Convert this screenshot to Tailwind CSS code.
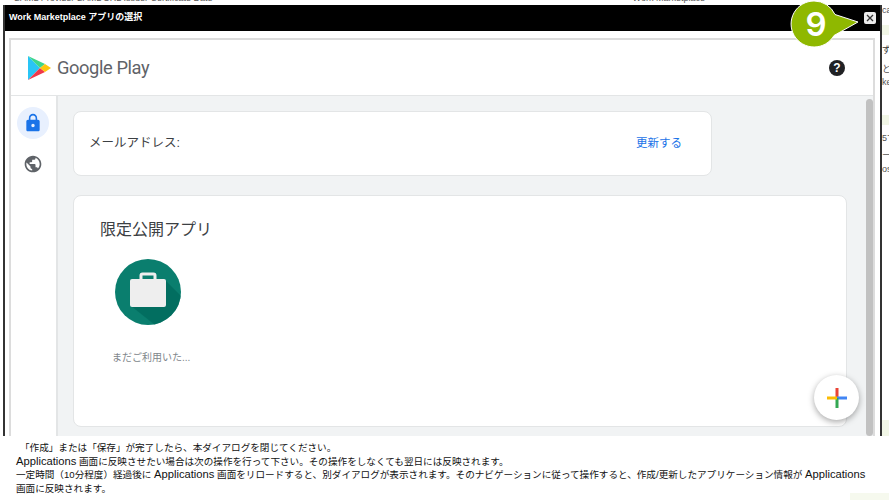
<!DOCTYPE html>
<html><head><meta charset="utf-8"><script src="https://cdn.jsdelivr.net/npm/@tailwindcss/browser@4"></script></head>
<body class="m-0 w-[889px] h-[500px] overflow-hidden bg-white font-['Liberation_Sans','Noto_Sans_CJK_JP',sans-serif]">
<div class="relative w-[889px] h-[500px] overflow-hidden">
  <!-- page behind the dialog -->
  <div class="absolute left-0 top-[-8px] w-[889px] whitespace-nowrap text-[9px] leading-[12px] text-[#555]"><span class="ml-[14px]">SAML Provider SAML URL Issuer Certificate Date</span><span class="ml-[420px]">Work Marketplace</span></div>
  <div class="absolute left-[881px] top-0 w-[8px] h-[500px] overflow-hidden text-[9px] leading-[12px] text-[#555] whitespace-nowrap">
    <div class="absolute left-[1px] top-[4px]">ca</div>
    <div class="absolute left-0 top-[25px] w-[8px] h-[10px] bg-[#f1f6e6]"></div>
    <div class="absolute left-[1px] top-[44px] text-[#333]">ず</div>
    <div class="absolute left-[1px] top-[63px]">との</div>
    <div class="absolute left-[1px] top-[76px]">ke</div>
    <div class="absolute left-0 top-[115px] w-[8px] h-[10px] bg-[#f1f6e6]"></div>
    <div class="absolute left-[1px] top-[132px]">5ず</div>
    <div class="absolute left-[1px] top-[149px]">ー</div>
    <div class="absolute left-[1px] top-[163px]">os</div>
    <div class="absolute left-0 top-[420px] w-[8px] h-[16px] bg-[#f1f6e6]"></div>
  </div>
  <div class="absolute left-[850px] top-[493px] w-[39px] h-[7px] bg-[#f6f9ee]"></div>
  <!-- dialog -->
  <div class="absolute left-[3px] top-[5px] w-[879px] h-[431px] bg-white border-x-2 border-[#333] flex flex-col">
    <div class="h-[26px] shrink-0 bg-black text-white text-[9px] font-bold flex items-center pl-[4px]">Work Marketplace アプリの選択</div>
    <div class="flex-1 min-h-0 pt-[7px] pl-[4px] pr-[5px]">
      <div class="h-full border-2 border-b-0 border-[#dcdcdc] flex flex-col bg-white">
        <div class="h-[56px] shrink-0 border-b border-[#e3e5e6] flex items-center justify-between pl-[17px] pr-[28px]">
          <div class="flex items-center gap-[6px]">
            <svg width="23" height="24" viewBox="0 0 23 24"><path d="M0 0L12 12L0 24Z" fill="#29c5f6"/><path d="M0 0L17 8L12 12Z" fill="#3dd68c"/><path d="M0 24L12 12L17 16Z" fill="#f0384a"/><path d="M17 8L23 12L17 16L12 12Z" fill="#fdc60d"/></svg>
            <span class="text-[18.3px] text-[#5f6368] font-['Roboto',sans-serif] tracking-[-0.4px]">Google Play</span>
          </div>
          <svg width="16" height="16" viewBox="0 0 16 16"><circle cx="8" cy="8" r="8" fill="#202124"/><text x="8" y="12" text-anchor="middle" font-size="12" font-weight="700" fill="#fff" font-family="Liberation Sans">?</text></svg>
        </div>
        <div class="flex-1 min-h-0 flex">
          <div class="w-[47px] shrink-0 bg-white border-r-2 border-[#e3e5e6] flex flex-col items-center pt-[11px] pr-[1px] gap-[15px]">
            <div class="w-[32px] h-[32px] rounded-full bg-[#e8f0fe] flex items-center justify-center">
              <svg width="20" height="20" viewBox="0 0 24 24"><path fill="#1a73e8" d="M18 8h-1V6c0-2.76-2.24-5-5-5S7 3.24 7 6v2H6c-1.1 0-2 .9-2 2v10c0 1.1.9 2 2 2h12c1.1 0 2-.9 2-2V10c0-1.1-.9-2-2-2zm-6 9c-1.1 0-2-.9-2-2s.9-2 2-2 2 .9 2 2-.9 2-2 2zm3.1-9H8.9V6c0-1.71 1.39-3.1 3.1-3.1 1.71 0 3.1 1.39 3.1 3.1v2z"/></svg>
            </div>
            <svg width="20" height="20" viewBox="0 0 24 24"><path fill="#5f6368" d="M12 2C6.48 2 2 6.48 2 12s4.48 10 10 10 10-4.48 10-10S17.52 2 12 2zm-1 17.93c-3.95-.49-7-3.85-7-7.93 0-.62.08-1.21.21-1.79L9 15v1c0 1.1.9 2 2 2v1.93zm6.9-2.54c-.26-.81-1-1.39-1.9-1.39h-1v-3c0-.55-.45-1-1-1H8v-2h2c.55 0 1-.45 1-1V7h2c1.1 0 2-.9 2-2v-.41c2.93 1.19 5 4.06 5 7.41 0 2.08-.8 3.97-2.1 5.39z"/></svg>
          </div>
          <div class="flex-1 min-w-0 bg-[#f1f3f4] flex relative">
            <div class="flex-1 min-w-0 pl-[15px] pt-[15px] flex flex-col gap-[19px]">
              <div class="w-[639px] h-[65px] bg-white rounded-[8px] border border-[#e3e5e6] flex items-center justify-between pl-[15px] pr-[29px]">
                <span class="text-[12.5px] text-[#3c4043]">メールアドレス:</span>
                <span class="text-[11.5px] text-[#1a73e8]">更新する</span>
              </div>
              <div class="w-[774px] h-[232px] bg-white rounded-[8px] border border-[#e3e5e6] pl-[26px] pt-[23px]">
                <div class="text-[16px] leading-[22px] text-[#3c4043]">限定公開アプリ</div>
                <div class="mt-[18px] ml-[15px] w-[66px] h-[66px] rounded-full bg-[#0a7e6e] relative overflow-hidden">
                  <svg class="absolute inset-0" width="66" height="66" viewBox="0 0 66 66"><path d="M51 22L66 37V66H40L16 47Z" fill="#00695c" opacity=".75"/><rect x="15" y="20" width="36" height="28" rx="2" fill="#eeeeee"/><path d="M26 20V16.5a1.5 1.5 0 0 1 1.5-1.5h11a1.5 1.5 0 0 1 1.5 1.5V20" fill="none" stroke="#eeeeee" stroke-width="3"/></svg>
                </div>
                <div class="mt-[26px] ml-[12px] text-[10px] leading-[14px] text-[#80868b]">まだご利用いた...</div>
              </div>
            </div>
            <div class="absolute right-0 top-[3px] bottom-[0px] w-[7px] rounded-full bg-[#c1c1c1]"></div>
          </div>
        </div>
      </div>
    </div>
  </div>
  <!-- close -->
  <div class="absolute left-[864px] top-[12px] w-[12px] h-[12px] bg-[#ececec] rounded-[2px] flex items-center justify-center"><svg width="8" height="8" viewBox="0 0 8 8"><path d="M1 1L7 7M7 1L1 7" stroke="#333" stroke-width="1.3"/></svg></div>
  <!-- badge -->
  <svg class="absolute left-[790px] top-0" width="70" height="48" viewBox="0 0 70 48"><path d="M24 1a23 23 0 0 1 21 13.5L68 22L44 35.5A23 23 0 1 1 24 1Z" fill="#8fb800" stroke="#fff" stroke-width="1"/></svg>
  <span class="absolute left-[797px] top-[2px] w-[38px] text-center text-[33px] leading-[44px] font-semibold text-white font-['Inter',sans-serif]">9</span>
  <!-- fab -->
  <div class="absolute left-[814px] top-[375px] w-[45px] h-[45px] rounded-full bg-white shadow-[0_2px_6px_rgba(0,0,0,0.35)] flex items-center justify-center">
    <svg width="20" height="20" viewBox="0 0 20 20"><rect x="8.5" y="0" width="3" height="10" fill="#ea4335"/><rect x="10" y="8.5" width="10" height="3" fill="#4285f4"/><rect x="8.5" y="10" width="3" height="10" fill="#34a853"/><rect x="0" y="8.5" width="10" height="3" fill="#fbbc04"/></svg>
  </div>
  <!-- note -->
  <div class="absolute left-0 top-[436px] w-[881px] h-[56px] bg-white pl-[16px] pt-[5px] text-[9.6px] leading-[13.5px] text-[#111]">
    <div class="pl-[4px]">「作成」または「保存」が完了したら、本ダイアログを閉じてください。</div>
    <div><span class="text-[11.2px]">Applications</span> 画面に反映させたい場合は次の操作を行って下さい。その操作をしなくても翌日には反映されます。</div>
    <div>一定時間（10分程度）経過後に <span class="text-[11.2px]">Applications</span> 画面をリロードすると、別ダイアログが表示されます。そのナビゲーションに従って操作すると、作成/更新したアプリケーション情報が <span class="text-[11.2px]">Applications</span></div>
    <div>画面に反映されます。</div>
  </div>
</div>
</body></html>
